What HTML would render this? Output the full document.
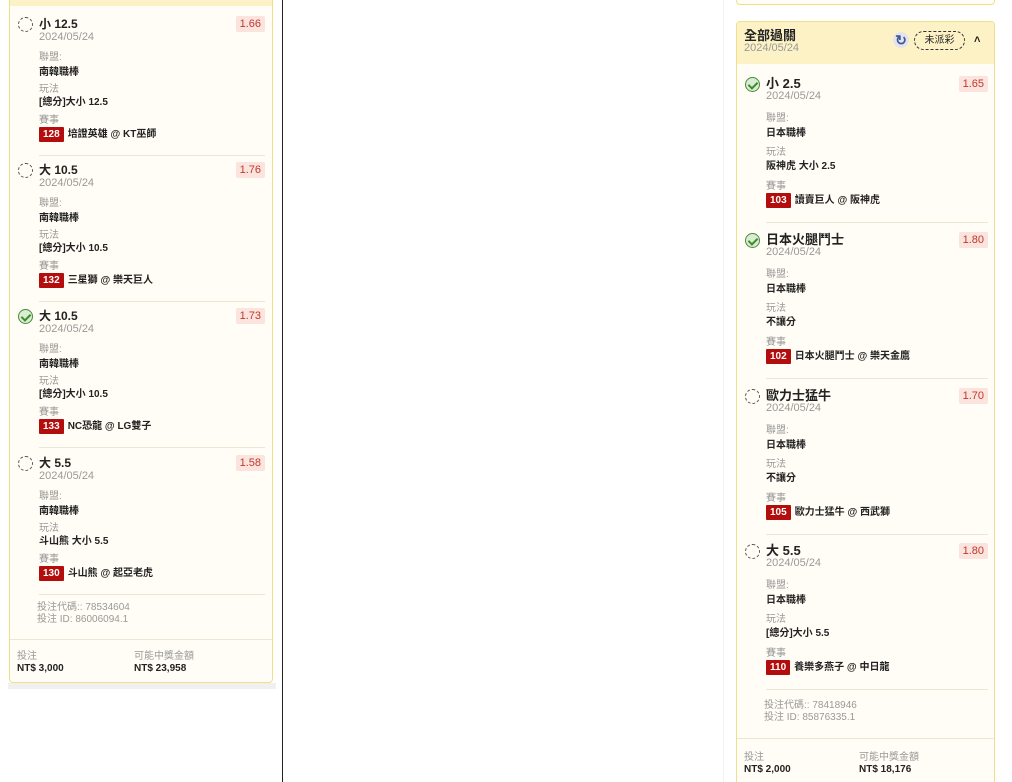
<!DOCTYPE html>
<html style="width:1012px;height:782px;overflow:hidden"><head><meta charset="utf-8">
<style>
*{margin:0;padding:0;box-sizing:border-box}
body{width:1012px;height:782px;background:#fff;position:relative;overflow:hidden;font-family:"Liberation Sans","Noto Sans CJK TC",sans-serif;color:#222}
.card{position:absolute;background:#fffdf5;border:1px solid #f0df8a;border-radius:4px}
.it{position:absolute;width:240px;height:140px}
.it>*{position:absolute;white-space:nowrap}
.ic{left:0;top:0;width:15px;height:15px;border-radius:50%;border:1.3px dashed #555}
.ok{border:1.3px solid #4a8a3a;background:#d9edd2}
.ok::after{content:"";position:absolute;left:4px;top:1.5px;width:4px;height:7px;border:solid #3f8a2f;border-width:0 2px 2px 0;transform:rotate(45deg)}
.t{left:14px;top:0;font-size:12px;font-weight:bold;line-height:14px}
.d{left:14px;top:14px;font-size:11px;color:#999;line-height:12px}
.l{left:14px;font-size:10px;color:#999;line-height:12px}
.v{left:14px;font-size:10px;font-weight:bold;line-height:12px}
.b{left:14px;height:15px;font-size:10px;font-weight:bold;line-height:15px}
.b span{display:inline-block;background:#b30d0d;color:#fff;padding:0 4px;margin-right:4px;border-radius:1px}
.o{right:0;top:-1px;background:#fbe3de;color:#c0392b;font-size:11px;padding:1px 4px;border-radius:2px;line-height:14px}
.hr{left:14px;right:0;height:1px;background:#ece6d4}
.L .l1{top:35px}.L .v1{top:50px}.L .l2{top:67px}.L .v2{top:80px}.L .l3{top:98px}.L .b{top:110px}.L .hr{top:138px}
.R .d{top:13px}.R .t{font-size:13px}.R .l1{top:36px}.R .v1{top:51px}.R .l2{top:70px}.R .v2{top:84px}.R .l3{top:104px}.R .b{top:116px}.R .hr{top:145px}
.s{position:absolute;font-size:10px;line-height:12px;white-space:nowrap}
.g{color:#999}.bb{font-weight:bold}
</style></head><body>

<div class="card" style="left:9px;top:-10px;width:264px;height:693px">
  <div style="position:absolute;left:0;right:0;top:0;height:15px;background:#fdf2c6;border-radius:4px 4px 0 0"></div>
</div>
<div style="position:absolute;left:8px;top:683px;width:268px;height:6px;background:#f0f0f0"></div>
<div style="position:absolute;left:282px;top:0;width:1px;height:782px;background:#222"></div>

<div class="it L" style="left:18px;top:17px;width:247px">
 <div class="ic"></div><div class="t" style="left:21px">小 12.5</div><div class="d" style="left:21px">2024/05/24</div><div class="o">1.66</div>
 <div class="l l1" style="left:21px">聯盟:</div><div class="v v1" style="left:21px">南韓職棒</div>
 <div class="l l2" style="left:21px">玩法</div><div class="v v2" style="left:21px">[總分]大小 12.5</div>
 <div class="l l3" style="left:21px">賽事</div><div class="b" style="left:21px"><span>128</span>培證英雄 @ KT巫師</div>
 <div class="hr" style="left:21px"></div>
</div>
<div class="it L" style="left:18px;top:163px;width:247px">
 <div class="ic"></div><div class="t" style="left:21px">大 10.5</div><div class="d" style="left:21px">2024/05/24</div><div class="o">1.76</div>
 <div class="l l1" style="left:21px">聯盟:</div><div class="v v1" style="left:21px">南韓職棒</div>
 <div class="l l2" style="left:21px">玩法</div><div class="v v2" style="left:21px">[總分]大小 10.5</div>
 <div class="l l3" style="left:21px">賽事</div><div class="b" style="left:21px"><span>132</span>三星獅 @ 樂天巨人</div>
 <div class="hr" style="left:21px"></div>
</div>
<div class="it L" style="left:18px;top:309px;width:247px">
 <div class="ic ok"></div><div class="t" style="left:21px">大 10.5</div><div class="d" style="left:21px">2024/05/24</div><div class="o">1.73</div>
 <div class="l l1" style="left:21px">聯盟:</div><div class="v v1" style="left:21px">南韓職棒</div>
 <div class="l l2" style="left:21px">玩法</div><div class="v v2" style="left:21px">[總分]大小 10.5</div>
 <div class="l l3" style="left:21px">賽事</div><div class="b" style="left:21px"><span>133</span>NC恐龍 @ LG雙子</div>
 <div class="hr" style="left:21px"></div>
</div>
<div class="it L" style="left:18px;top:456px;width:247px">
 <div class="ic"></div><div class="t" style="left:21px">大 5.5</div><div class="d" style="left:21px">2024/05/24</div><div class="o">1.58</div>
 <div class="l l1" style="left:21px">聯盟:</div><div class="v v1" style="left:21px">南韓職棒</div>
 <div class="l l2" style="left:21px">玩法</div><div class="v v2" style="left:21px">斗山熊 大小 5.5</div>
 <div class="l l3" style="left:21px">賽事</div><div class="b" style="left:21px"><span>130</span>斗山熊 @ 起亞老虎</div>
 <div class="hr" style="left:21px"></div>
</div>
<div class="s g" style="left:37px;top:602px">投注代碼:: 78534604</div>
<div class="s g" style="left:37px;top:614px">投注 ID: 86006094.1</div>
<div style="position:absolute;left:10px;top:639px;width:262px;height:1px;background:#ece6d4"></div>
<div class="s g" style="left:17px;top:651px">投注</div>
<div class="s bb" style="left:17px;top:663px">NT$ 3,000</div>
<div class="s g" style="left:134px;top:651px">可能中獎金額</div>
<div class="s bb" style="left:134px;top:663px">NT$ 23,958</div>

<!-- right -->
<div class="card" style="left:736px;top:-10px;width:259px;height:15px"></div>
<div style="position:absolute;left:723px;top:0;width:1px;height:782px;background:#f2f2f2"></div>
<div class="card" style="left:736px;top:21px;width:259px;height:770px">
  <div style="position:absolute;left:0;right:0;top:0;height:42px;background:#fdf2c6;border-radius:4px 4px 0 0"></div>
</div>
<div class="s bb" style="left:744px;top:28px;font-size:13px;line-height:15px">全部過關</div>
<div class="s g" style="left:744px;top:42px;font-size:11px">2024/05/24</div>
<div style="position:absolute;left:893px;top:32px;width:16px;height:16px;border-radius:50%;background:#e4e4ea;color:#3a5a9a;font-size:14px;font-weight:bold;line-height:16px;text-align:center">↻</div>
<div style="position:absolute;left:914px;top:31px;width:51px;height:19px;border:1px dashed #333;border-radius:10px;font-size:10px;line-height:17px;text-align:center">未派彩</div>
<div class="s bb" style="left:974px;top:34px;font-size:11px">˄</div>

<div class="it R" style="left:745px;top:77px;width:243px">
 <div class="ic ok"></div><div class="t" style="left:21px">小 2.5</div><div class="d" style="left:21px">2024/05/24</div><div class="o">1.65</div>
 <div class="l l1" style="left:21px">聯盟:</div><div class="v v1" style="left:21px">日本職棒</div>
 <div class="l l2" style="left:21px">玩法</div><div class="v v2" style="left:21px">阪神虎 大小 2.5</div>
 <div class="l l3" style="left:21px">賽事</div><div class="b" style="left:21px"><span>103</span>讀賣巨人 @ 阪神虎</div>
 <div class="hr" style="left:21px"></div>
</div>
<div class="it R" style="left:745px;top:233px;width:243px">
 <div class="ic ok"></div><div class="t" style="left:21px">日本火腿鬥士</div><div class="d" style="left:21px">2024/05/24</div><div class="o">1.80</div>
 <div class="l l1" style="left:21px">聯盟:</div><div class="v v1" style="left:21px">日本職棒</div>
 <div class="l l2" style="left:21px">玩法</div><div class="v v2" style="left:21px">不讓分</div>
 <div class="l l3" style="left:21px">賽事</div><div class="b" style="left:21px"><span>102</span>日本火腿鬥士 @ 樂天金鷹</div>
 <div class="hr" style="left:21px"></div>
</div>
<div class="it R" style="left:745px;top:389px;width:243px">
 <div class="ic"></div><div class="t" style="left:21px">歐力士猛牛</div><div class="d" style="left:21px">2024/05/24</div><div class="o">1.70</div>
 <div class="l l1" style="left:21px">聯盟:</div><div class="v v1" style="left:21px">日本職棒</div>
 <div class="l l2" style="left:21px">玩法</div><div class="v v2" style="left:21px">不讓分</div>
 <div class="l l3" style="left:21px">賽事</div><div class="b" style="left:21px"><span>105</span>歐力士猛牛 @ 西武獅</div>
 <div class="hr" style="left:21px"></div>
</div>
<div class="it R" style="left:745px;top:544px;width:243px">
 <div class="ic"></div><div class="t" style="left:21px">大 5.5</div><div class="d" style="left:21px">2024/05/24</div><div class="o">1.80</div>
 <div class="l l1" style="left:21px">聯盟:</div><div class="v v1" style="left:21px">日本職棒</div>
 <div class="l l2" style="left:21px">玩法</div><div class="v v2" style="left:21px">[總分]大小 5.5</div>
 <div class="l l3" style="left:21px">賽事</div><div class="b" style="left:21px"><span>110</span>養樂多燕子 @ 中日龍</div>
 <div class="hr" style="left:21px"></div>
</div>
<div class="s g" style="left:764px;top:700px">投注代碼:: 78418946</div>
<div class="s g" style="left:764px;top:712px">投注 ID: 85876335.1</div>
<div style="position:absolute;left:737px;top:738px;width:257px;height:1px;background:#ece6d4"></div>
<div class="s g" style="left:744px;top:752px">投注</div>
<div class="s bb" style="left:744px;top:764px">NT$ 2,000</div>
<div class="s g" style="left:859px;top:752px">可能中獎金額</div>
<div class="s bb" style="left:859px;top:764px">NT$ 18,176</div>
</body></html>
